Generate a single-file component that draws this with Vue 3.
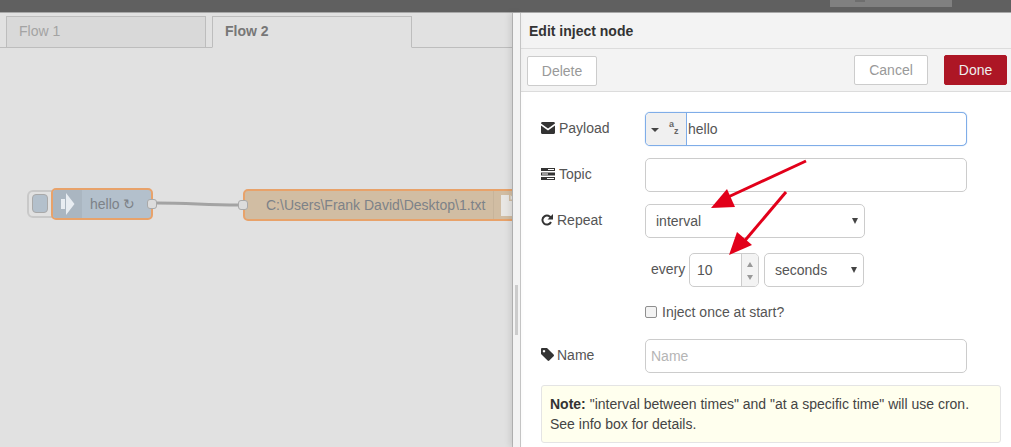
<template>
  <div class="screen">
    <div class="topbar"><span class="deploy"></span></div>
    <div class="main">
      <div class="workspace">
        <div class="tabs">
          <div class="tab">Flow 1</div>
          <div class="tab active">Flow 2</div>
        </div>
        <div class="canvas">
          <svg class="wire" width="512" height="300" viewBox="0 0 512 300">
            <path d="M157 155 C190 155 205 157 238 157" fill="none" stroke="#a3a3a3" stroke-width="3" />
          </svg>
          <div class="inject-btn"><span></span></div>
          <div class="node inject">
            <div class="node-icon">
              <svg width="14" height="22" viewBox="0 0 14 22">
                <path d="M0 6h4v10H0zM5 6V0l8.500 11L5 22v-6z" fill="#e8edf2" />
              </svg>
            </div>
            <span class="node-label">hello ↻</span>
            <span class="port out"></span>
          </div>
          <div class="node file">
            <span class="port in"></span>
            <span class="node-label">C:\Users\Frank David\Desktop\1.txt</span>
            <div class="file-icon">
              <svg width="14" height="24" viewBox="0 0 14 24">
                <path d="M0 2h8v6h6v15H0zM9.500 2l4.500 4.500H9.500z" fill="#e8e6e3" />
              </svg>
            </div>
          </div>
        </div>
      </div>
      <div class="gutter"><span class="handle"></span></div>
      <div class="tray">
        <div class="tray-title">Edit inject node</div>
        <div class="tray-toolbar">
          <button class="btn delete">Delete</button>
          <div class="right-btns">
            <button class="btn">Cancel</button>
            <button class="btn done">Done</button>
          </div>
        </div>
        <div class="form">
          <div class="row">
            <label>
              <svg class="ico" width="14" height="12" viewBox="0 0 14 12"><path d="M0 1.500C0 .7.600 0 1.400 0h11.200c.8 0 1.400.7 1.400 1.500L7 6.500zM0 3.400l7 5 7-5V10.500c0 .8-.6 1.500-1.400 1.500H1.400C.6 12 0 11.300 0 10.500z" fill="#333" /></svg>
              Payload
            </label>
            <div class="typed focus">
              <div class="type-btn">
                <span class="caret"></span>
                <span class="az"><b>a</b><b>z</b></span>
              </div>
              <span class="typed-value">hello</span>
            </div>
          </div>
          <div class="row">
            <label>
              <svg class="ico" width="14" height="12" viewBox="0 0 14 12"><path d="M0 0h14v3H0zM0 4.500h14v3H0zM0 9h14v3H0z" fill="#333" /><path d="M7 1.500h6M1 6h6M6 10.500h7" stroke="#fff" stroke-width="1" /></svg>
              Topic
            </label>
            <div class="input"></div>
          </div>
          <div class="row repeat">
            <label>
              <svg class="ico" width="12" height="12" viewBox="0 0 12 12"><path d="M10.200 4.600A4.500 4.500 0 1 0 10 8" fill="none" stroke="#333" stroke-width="2" /><path d="M12 0v5.500H6.500z" fill="#333" /></svg>
              Repeat
            </label>
            <div class="select wide">interval<span class="arrow"></span></div>
          </div>
          <div class="row every">
            <span class="every-label">every</span>
            <div class="spinner">
              <span class="spin-value">10</span>
              <div class="spin-btns"><i class="up"></i><i class="down"></i></div>
            </div>
            <div class="select units">seconds<span class="arrow"></span></div>
          </div>
          <div class="row check">
            <span class="checkbox"></span>
            <span>Inject once at start?</span>
          </div>
          <div class="row name">
            <label class="tight">
              <svg class="ico" width="13" height="13" viewBox="0 0 13 13"><path d="M0 1.200C0 .5.500 0 1.200 0H6l6.600 6.600c.5.500.5 1.200 0 1.700l-4.300 4.300c-.5.500-1.200.5-1.700 0L0 6zM3 2a1.200 1.200 0 1 0 .01 0z" fill="#333" fill-rule="evenodd" /></svg>
              Name
            </label>
            <div class="input placeholder">Name</div>
          </div>
          <div class="note">
            <b>Note:</b> "interval between times" and "at a specific time" will use cron.<br />
            See info box for details.
          </div>
        </div>
      </div>
    </div>
    <svg class="arrows" width="1011" height="447" viewBox="0 0 1011 447">
      <path d="M806 161 L726 198" stroke="#e2001a" stroke-width="3" fill="none" />
      <path d="M711 208 L727 189 L735 207z" fill="#e2001a" />
      <path d="M786 192 L742 244" stroke="#e2001a" stroke-width="3" fill="none" />
      <path d="M729 255 L737 232 L752 245z" fill="#e2001a" />
    </svg>
  </div>
</template>

<script setup>
</script>

<style>
html, body {
  margin: 0;
  overflow: hidden;
}
</style>

<style scoped>
.screen {
  position: relative;
  width: 1011px;
  height: 447px;
  overflow: hidden;
  font-family: "Liberation Sans", Arial, sans-serif;
  font-size: 14px;
  color: #555;
  background: #fff;
}

.topbar {
  height: 13px;
  background: #606060;
  display: flex;
  justify-content: flex-end;
  border-bottom: 1px solid #a8a8a8;
  box-sizing: border-box;
}

.deploy {
  position: relative;
  width: 122px;
  height: 7px;
  margin-right: 59px;
  background: #808080;
}

.deploy::before {
  content: "";
  position: absolute;
  left: 25px;
  top: 0;
  width: 10px;
  height: 2px;
  background: #6e6e6e;
}

.main {
  display: flex;
  height: 434px;
}

.workspace {
  width: 512px;
  display: flex;
  flex-direction: column;
  background: #e1e1e1;
  border-right: 1px solid #bdbdbd;
}

.tabs {
  height: 35px;
  box-sizing: border-box;
  padding: 3px 0 0 6px;
  display: flex;
  gap: 6px;
  border-bottom: 1px solid #bdbdbd;
}

.tab {
  width: 200px;
  height: 32px;
  box-sizing: border-box;
  padding: 5px 12px 0;
  border: 1px solid #bdbdbd;
  background: #d9d9d9;
  color: #a3a3a3;
  font-size: 14px;
  line-height: 18px;
}

.tab.active {
  background: #e1e1e1;
  border-bottom-color: #e1e1e1;
  color: #777;
  font-weight: bold;
}

.canvas {
  position: relative;
  flex: 1;
  overflow: hidden;
}

.wire {
  position: absolute;
  left: 0;
  top: 0;
}

.inject-btn {
  position: absolute;
  left: 27px;
  top: 142px;
  width: 30px;
  height: 28px;
  box-sizing: border-box;
  border: 2px solid #c9c9c9;
  border-radius: 6px 0 0 6px;
  background: #e1e1e1;
  padding: 2px 3px;
}

.inject-btn span {
  display: block;
  width: 16px;
  height: 19px;
  box-sizing: border-box;
  border: 1px solid #a9a9a9;
  border-radius: 4px;
  background: #b3c0cc;
}

.node {
  position: absolute;
  height: 32px;
  box-sizing: border-box;
  border: 2px solid #e8a26a;
  border-radius: 5px;
  display: flex;
  align-items: center;
  color: #7d8288;
  font-size: 14px;
}

.inject {
  left: 51px;
  top: 140px;
  width: 102px;
  background: #b3c0cc;
}

.node-icon {
  width: 29px;
  height: 100%;
  background: #aab6c1;
  border-radius: 3px 0 0 3px;
  display: flex;
  align-items: center;
  justify-content: center;
}

.inject .node-label {
  margin-left: 8px;
}

.file {
  left: 243px;
  top: 141px;
  width: 300px;
  background: #d1bda3;
}

.file .node-label {
  margin-left: 21px;
  white-space: nowrap;
}

.file-icon {
  margin-left: 8px;
  padding-left: 7px;
  height: 100%;
  display: flex;
  align-items: center;
  border-left: 1px solid #c7b49b;
}

.port {
  position: absolute;
  width: 10px;
  height: 10px;
  box-sizing: border-box;
  border: 1px solid #a9a9a9;
  border-radius: 3px;
  background: #dcdcdc;
  top: 9px;
}

.port.out {
  right: -6px;
}

.port.in {
  left: -7px;
}

.gutter {
  width: 7px;
  background: #f3f3f3;
  border-right: 1px solid #c4c4c4;
  position: relative;
  box-shadow: -3px 0 6px rgba(0, 0, 0, 0.1);
}

.handle {
  position: absolute;
  left: 2px;
  top: 272px;
  width: 3px;
  height: 50px;
  background: #ccc;
}

.tray {
  flex: 1;
  min-width: 0;
  display: flex;
  flex-direction: column;
}

.tray-title {
  height: 36px;
  box-sizing: border-box;
  padding: 10px 8px 0;
  background: #f3f3f3;
  border-bottom: 1px solid #dcdcdc;
  color: #333;
  font-weight: bold;
  font-size: 14px;
  line-height: 16px;
}

.tray-toolbar {
  height: 43px;
  box-sizing: border-box;
  padding: 6px 4px 0 6px;
  background: #f3f3f3;
  border-bottom: 1px solid #dcdcdc;
  display: flex;
  justify-content: space-between;
  align-items: flex-start;
}

.right-btns {
  display: flex;
  gap: 16px;
}

.btn {
  height: 30px;
  width: 74px;
  padding: 0;
  box-sizing: border-box;
  border: 1px solid #ccc;
  border-radius: 2px;
  background: #fff;
  color: #999;
  font-family: inherit;
  font-size: 14px;
}

.btn.delete {
  width: 70px;
  margin-top: 1px;
}

.btn.done {
  width: 63px;
  border-color: #ad1625;
  background: #ad1625;
  color: #eee;
}

.form {
  padding: 20px 0 0 20px;
  display: flex;
  flex-direction: column;
}

.row {
  display: flex;
  align-items: center;
  height: 34px;
  margin-bottom: 12px;
}

.row label {
  width: 104px;
  flex: none;
  display: flex;
  align-items: center;
  gap: 4px;
  margin-top: -3px;
}

.row label.tight {
  gap: 3px;
}

.ico {
  flex: none;
}

.input,
.typed,
.select,
.spinner {
  box-sizing: border-box;
  height: 34px;
  background: #fff;
  border: 1px solid #ccc;
  border-radius: 5px;
}

.input {
  width: 322px;
}

.placeholder {
  padding: 8px 5px;
  line-height: 16px;
  color: #b5b5b5;
}

.typed {
  width: 322px;
  display: flex;
  overflow: hidden;
  color: #555;
}

.typed.focus {
  border-color: #7fade8;
  box-shadow: 0 0 1px #7fade8;
}

.type-btn {
  width: 41px;
  background: #f0f0f0;
  border-right: 1px solid #7fade8;
  display: flex;
  align-items: center;
  padding-left: 5px;
  box-sizing: border-box;
  gap: 10px;
}

.caret {
  width: 0;
  height: 0;
  border-style: solid;
  border-width: 4px 4px 0;
  border-color: #444 transparent transparent;
  margin-top: 2px;
}

.az {
  display: flex;
  flex-direction: column;
  font-size: 9px;
  line-height: 7px;
  color: #666;
  margin-top: -2px;
}

.az b:last-child {
  margin-left: 5px;
}

.typed-value {
  margin-left: 1px;
  line-height: 32px;
}

.select {
  position: relative;
  padding: 0 10px;
  line-height: 32px;
  color: #555;
}

.select.wide {
  width: 220px;
}

.select.units {
  width: 100px;
  margin-left: 5px;
}

.arrow {
  position: absolute;
  right: 6px;
  top: 13px;
  width: 0;
  height: 0;
  border-style: solid;
  border-width: 6px 3.500px 0;
  border-color: #444 transparent transparent;
}

.repeat {
  margin-bottom: 15px;
}

.every {
  margin-bottom: 17px;
}

.every-label {
  width: 38px;
  margin-left: 110px;
  flex: none;
  margin-top: -2px;
}

.spinner {
  width: 70px;
  display: flex;
  justify-content: space-between;
  overflow: hidden;
  flex: none;
}

.spin-value {
  margin-left: 7px;
  line-height: 32px;
}

.spin-btns {
  width: 17px;
  background: #f3f3f3;
  border-left: 1px solid #ccc;
  display: flex;
  flex-direction: column;
  align-items: center;
  justify-content: space-between;
  padding: 8px 0 6px;
  box-sizing: border-box;
}

.spin-btns i {
  width: 0;
  height: 0;
  border-style: solid;
}

.spin-btns .up {
  border-width: 0 3.500px 5px;
  border-color: transparent transparent #999;
}

.spin-btns .down {
  border-width: 5px 3.500px 0;
  border-color: #999 transparent transparent;
}

.check {
  height: 16px;
  margin-bottom: 19px;
  padding-left: 104px;
  gap: 5px;
}

.checkbox {
  width: 12px;
  height: 12px;
  box-sizing: border-box;
  border: 1px solid #8f8f8f;
  border-radius: 2px;
  background: #f3f3f3;
}

.note {
  margin-right: 10px;
  padding: 8px 8px;
  background: #ffe;
  border: 1px solid #e4e4e4;
  border-radius: 3px;
  color: #444;
  font-size: 14px;
  line-height: 20px;
}

.note b {
  color: #333;
}

.arrows {
  position: absolute;
  left: 0;
  top: 0;
  pointer-events: none;
}
</style>
